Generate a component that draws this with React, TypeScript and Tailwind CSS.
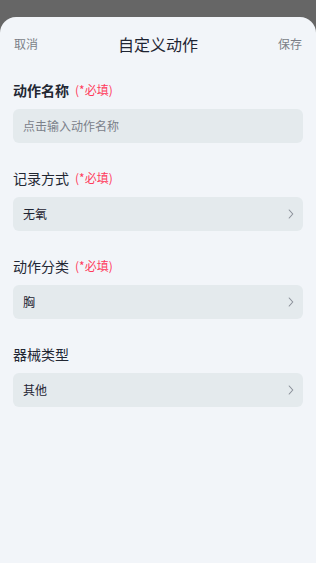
import React from "react";

const font = { fontFamily: '"Noto Sans CJK SC", "Noto Sans", sans-serif' };

function Chevron() {
  return (
    <svg width="6" height="10" viewBox="0 0 6 10" fill="none" className="shrink-0">
      <path d="M1.2 1 L4.8 5 L1.2 9" stroke="#8a9099" strokeWidth="1.1" strokeLinecap="round" strokeLinejoin="round" />
    </svg>
  );
}

function Section({ label, required, bold, children }: { label: string; required?: boolean; bold?: boolean; children: React.ReactNode }) {
  return (
    <div className="flex flex-col mb-[25px]">
      <div className="flex items-center h-[20px] gap-[6px]">
        <span className={`text-[14px] leading-[20px] text-[#222733] ${bold ? "font-bold" : ""}`}>{label}</span>
        {required && <span className="text-[12px] leading-[20px] text-[#ff3b5c]">(*必填)</span>}
      </div>
      <div className="mt-[9px] h-[34px] rounded-[6px] bg-[#e4eaed] flex items-center justify-between pl-[10px] pr-[9px]">
        {children}
      </div>
    </div>
  );
}

export default function App() {
  return (
    <div className="w-[316px] h-[563px] bg-[#666666] flex flex-col overflow-hidden" style={font}>
      <div className="h-[17px] shrink-0" />
      <div className="flex-1 bg-[#f2f5f9] rounded-t-[16px] flex flex-col">
        <div className="h-[54px] flex items-center justify-between px-[14px] relative">
          <span className="text-[12px] text-[#7b7f87]">取消</span>
          <span className="absolute left-1/2 -translate-x-1/2 text-[16px] text-[#1f2533]">自定义动作</span>
          <span className="text-[12px] text-[#7b7f87]">保存</span>
        </div>
        <div className="px-[13px] pt-[9px] flex flex-col">
          <Section label="动作名称" required bold>
            <span className="text-[12px] text-[#7b818a]">点击输入动作名称</span>
          </Section>
          <Section label="记录方式" required>
            <span className="text-[12px] text-[#1f2533]">无氧</span>
            <Chevron />
          </Section>
          <Section label="动作分类" required>
            <span className="text-[12px] text-[#1f2533]">胸</span>
            <Chevron />
          </Section>
          <Section label="器械类型">
            <span className="text-[12px] text-[#1f2533]">其他</span>
            <Chevron />
          </Section>
        </div>
      </div>
    </div>
  );
}
